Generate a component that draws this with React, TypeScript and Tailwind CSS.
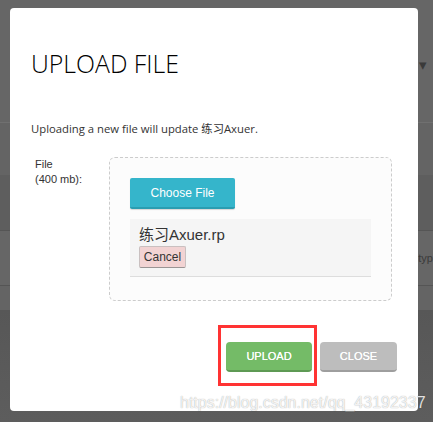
export default function App() {
  return (
    <div className="relative w-[433px] h-[422px] overflow-hidden bg-[#666666] font-['Liberation_Sans',Arial,sans-serif]">
      {/* page behind the overlay */}
      <div className="flex flex-col">
        <div className="h-[122px] flex justify-end items-start pt-[54px] pr-[6px]">
          <span className="text-[15px] text-[#3a3a3a]">S ▾</span>
        </div>
        <div className="h-[1px] bg-[#707070]" />
        <div className="h-[52px] bg-[#646464]" />
        <div className="h-[55px] bg-[#5e5e5e]" />
        <div className="h-[1px] bg-[#555555]" />
        <div className="h-[54px] bg-[#666666] flex justify-end items-center">
          <span className="text-[11px] text-[#3a3a3a]">typ</span>
        </div>
        <div className="h-[1px] bg-[#555555]" />
        <div className="h-[24px] bg-[#646464]" />
        <div className="h-[112px] bg-gradient-to-b from-[#575757] to-[#5d5d5d]" />
      </div>

      {/* modal */}
      <div className="absolute left-[10px] top-[8px] w-[408px] h-[403px] bg-white rounded-[4px] flex flex-col px-[21px]">
        <h2 className="pt-[39px] text-[24.8px] leading-8 text-black font-['Open_Sans',sans-serif] font-light">
          UPLOAD FILE
        </h2>
        <p className="mt-[42px] text-[11.3px] leading-4 text-[#333] font-['Open_Sans','Noto_Sans_CJK_SC',sans-serif]">
          Uploading a new file will update 练习Axuer.
        </p>

        <div className="mt-[20px] flex pl-[4px]">
          <div className="w-[74px] text-[11px] leading-[15px] text-[#333]">
            File
            <br />
            (400 mb):
          </div>
          <div className="w-[283px] h-[144px] border border-dashed border-[#cccccc] rounded-[6px] bg-[#fcfcfc] px-[20px] pt-[20px] flex flex-col">
            <button className="w-[105px] h-[31px] bg-[#35b5cb] text-white text-[12px] rounded-[2px] border-b-2 border-[#2a9db1] shadow-[0_1px_1px_rgba(0,0,0,0.15)]">
              Choose File
            </button>
            <div className="mt-[10px] bg-[#f5f5f5] border-b border-[#dddddd] pl-[9px] pt-[7px] pb-[8px] flex flex-col items-start">
              <span className="text-[15px] leading-[18px] text-[#333] font-['Liberation_Sans','Noto_Sans_CJK_SC',sans-serif]">
                练习Axuer.rp
              </span>
              <button className="mt-[2px] w-[47px] h-[22px] bg-[#f2d3d3] border border-[#c9c0c0] border-b-[#9a9494] rounded-[2px] text-[12px] text-[#333] leading-none">
                Cancel
              </button>
            </div>
          </div>
        </div>

        <div className="mt-[41px] flex justify-end gap-[8px]">
          <button className="w-[86px] h-[30px] bg-[#74bb67] border-b-2 border-[#5e9a54] rounded-[4px] text-white text-[11px] leading-none [text-shadow:0_0_0.4px_#fff]">
            UPLOAD
          </button>
          <button className="w-[77px] h-[30px] bg-[#bdbdbd] border-b-2 border-[#9e9e9e] rounded-[4px] text-white text-[11px] leading-none [text-shadow:0_0_0.4px_#fff]">
            CLOSE
          </button>
        </div>
      </div>

      {/* annotation */}
      <div className="absolute left-[218px] top-[325px] w-[99px] h-[61px] border-[3px] border-[#ff3333]" />

      {/* watermark */}
      <div className="absolute left-[180px] top-[394px] text-[16px] leading-[18px] text-white/85 [text-shadow:0_0_1px_rgba(0,0,0,0.4)] whitespace-nowrap">
        https://blog.csdn.net/qq_43192337
      </div>
    </div>
  )
}
